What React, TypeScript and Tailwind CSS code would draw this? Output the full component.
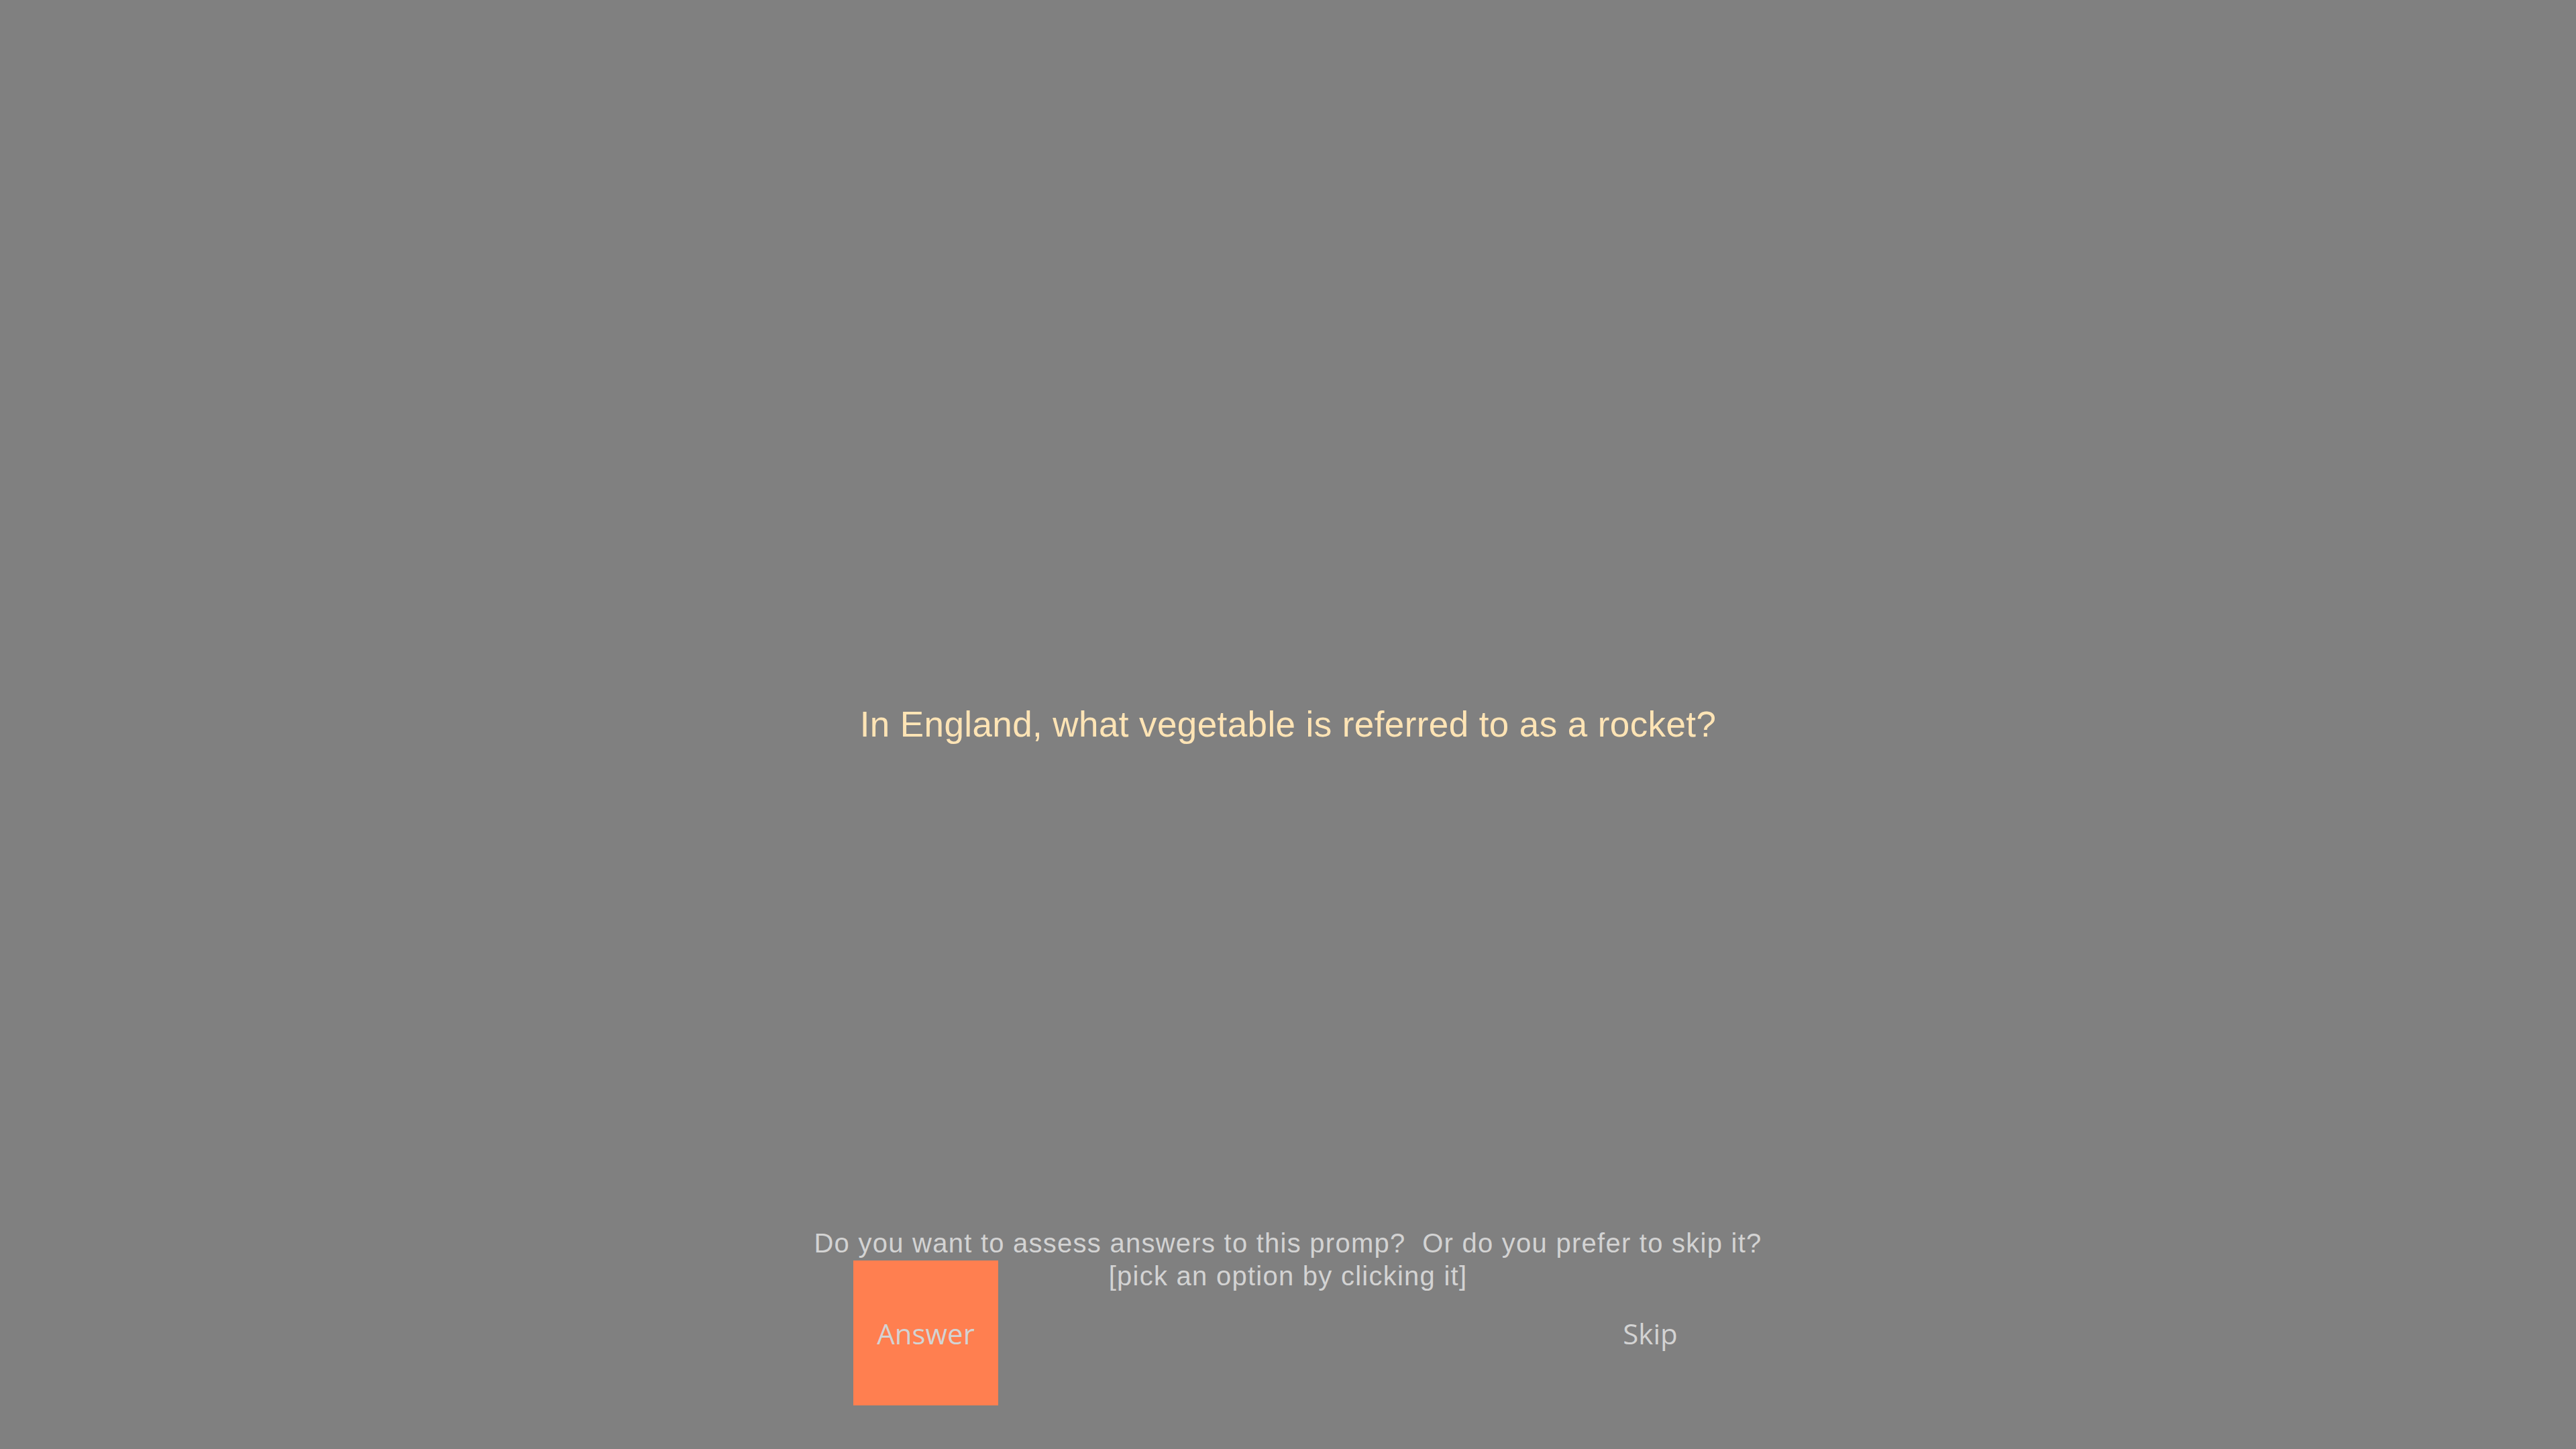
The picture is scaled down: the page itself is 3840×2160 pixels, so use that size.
export default function App() {
  return (
    <div className="h-screen w-full bg-[#808080] grid grid-rows-[1fr_auto_1fr] font-['Liberation_Sans',Arial,sans-serif]">
      <div />
      <div className="flex justify-center">
        <p className="text-[53px] tracking-[0.4px] text-[#ffe4b5]">In England, what vegetable is referred to as a rocket?</p>
      </div>
      <div className="flex flex-col justify-end pb-[65px]">
        <div className="h-[50px] text-center text-[40px] tracking-[1.25px] leading-[49px] text-[#d3d3d3] whitespace-pre">
          <p>{'Do you want to assess answers to this promp?  Or do you prefer to skip it?'}</p>
          <p>[pick an option by clicking it]</p>
        </div>
        <div className="grid grid-cols-2 w-[2160px] mx-auto place-items-center font-['Open_Sans',sans-serif] text-[42px] text-[#d3d3d3]">
          <button className="w-[216px] h-[216px] bg-[#ff7f50] flex items-center justify-center">Answer</button>
          <button className="w-[216px] h-[216px] flex items-center justify-center">Skip</button>
        </div>
      </div>
    </div>
  );
}
